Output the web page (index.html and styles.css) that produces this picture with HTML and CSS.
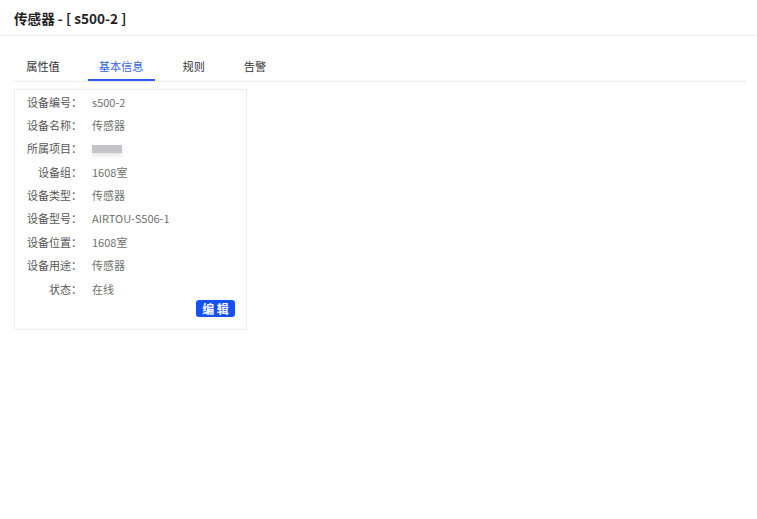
FILE: index.html
```html
<!DOCTYPE html>
<html lang="zh-CN">

<head>
    <meta charset="UTF-8" />
    <meta name="viewport" content="width=device-width, initial-scale=1.0" />
    <title>传感器 - [ s500-2 ]</title>
    <link rel="stylesheet" href="styles.css">
</head>

<body>
    <header class="page-header">
        <h1>传感器 - [ s500-2 ]</h1>
    </header>

    <div class="content">
        <div class="tab-container">
            <div class="tab">属性值</div>
            <div class="tab active">基本信息</div>
            <div class="tab">规则</div>
            <div class="tab">告警</div>
        </div>

        <div class="info-card">
            <div class="info-row">
                <span class="info-label">设备编号：</span>
                <span class="info-value">s500-2</span>
            </div>
            <div class="info-row">
                <span class="info-label">设备名称：</span>
                <span class="info-value">传感器</span>
            </div>
            <div class="info-row">
                <span class="info-label">所属项目：</span>
                <span class="info-value"><span class="masked"></span></span>
            </div>
            <div class="info-row">
                <span class="info-label">设备组：</span>
                <span class="info-value">1608室</span>
            </div>
            <div class="info-row">
                <span class="info-label">设备类型：</span>
                <span class="info-value">传感器</span>
            </div>
            <div class="info-row">
                <span class="info-label">设备型号：</span>
                <span class="info-value">AIRTOU-S506-1</span>
            </div>
            <div class="info-row">
                <span class="info-label">设备位置：</span>
                <span class="info-value">1608室</span>
            </div>
            <div class="info-row">
                <span class="info-label">设备用途：</span>
                <span class="info-value">传感器</span>
            </div>
            <div class="info-row">
                <span class="info-label">状态：</span>
                <span class="info-value">在线</span>
            </div>
            <div class="card-actions">
                <button class="edit-btn">编 辑</button>
            </div>
        </div>
    </div>
</body>

</html>
```

FILE: styles.css
```css
body {
    margin: 0;
    font-family: "Noto Sans CJK SC", "Microsoft YaHei", sans-serif;
    background-color: #fff;
    color: #333;
}

.page-header {
    height: 35px;
    margin-right: 2px;
    border-bottom: 1px dotted #dcdcdc;
    display: flex;
    align-items: center;
    padding-left: 14px;
}

.page-header h1 {
    margin: 0;
    font-size: 13.6px;
    font-weight: bold;
    color: #1f1f1f;
}

.content {
    padding: 15px 12px 0 14px;
}

.tab-container {
    display: flex;
    gap: 16.6px;
    border-bottom: 1px dotted #dcdcdc;
    padding-left: 1px;
}

.tab {
    height: 30px;
    line-height: 30px;
    padding: 0 11.2px;
    font-size: 11.2px;
    color: #333;
    box-sizing: border-box;
    cursor: pointer;
}

.tab.active {
    color: #3461ee;
    border-bottom: 2px solid #2c5cf2;
}

.info-card {
    width: 231px;
    margin-top: 7px;
    border: 1px dotted #dcdcdc;
}

.info-row {
    display: flex;
    align-items: center;
    height: 23.37px;
}

.info-label {
    width: 67px;
    text-align: right;
    font-size: 11px;
    color: #555;
}

.info-value {
    margin-left: 10px;
    font-size: 11px;
    color: #707070;
}

.masked {
    display: inline-block;
    width: 30px;
    height: 8px;
    margin-top: -3px;
    vertical-align: middle;
    background-color: #c4c4c8;
    box-shadow: 0 3px 4px #e6e6e8;
    filter: blur(0.7px);
}

.card-actions {
    display: flex;
    justify-content: flex-end;
    padding: 0 11px 12px 0;
}

.edit-btn {
    height: 17px;
    width: 39px;
    padding: 0;
    border: none;
    border-radius: 3px;
    background-color: #1551f5;
    color: #fff;
    font-family: inherit;
    font-size: 12px;
    font-weight: bold;
    line-height: 17px;
    cursor: pointer;
}
```
